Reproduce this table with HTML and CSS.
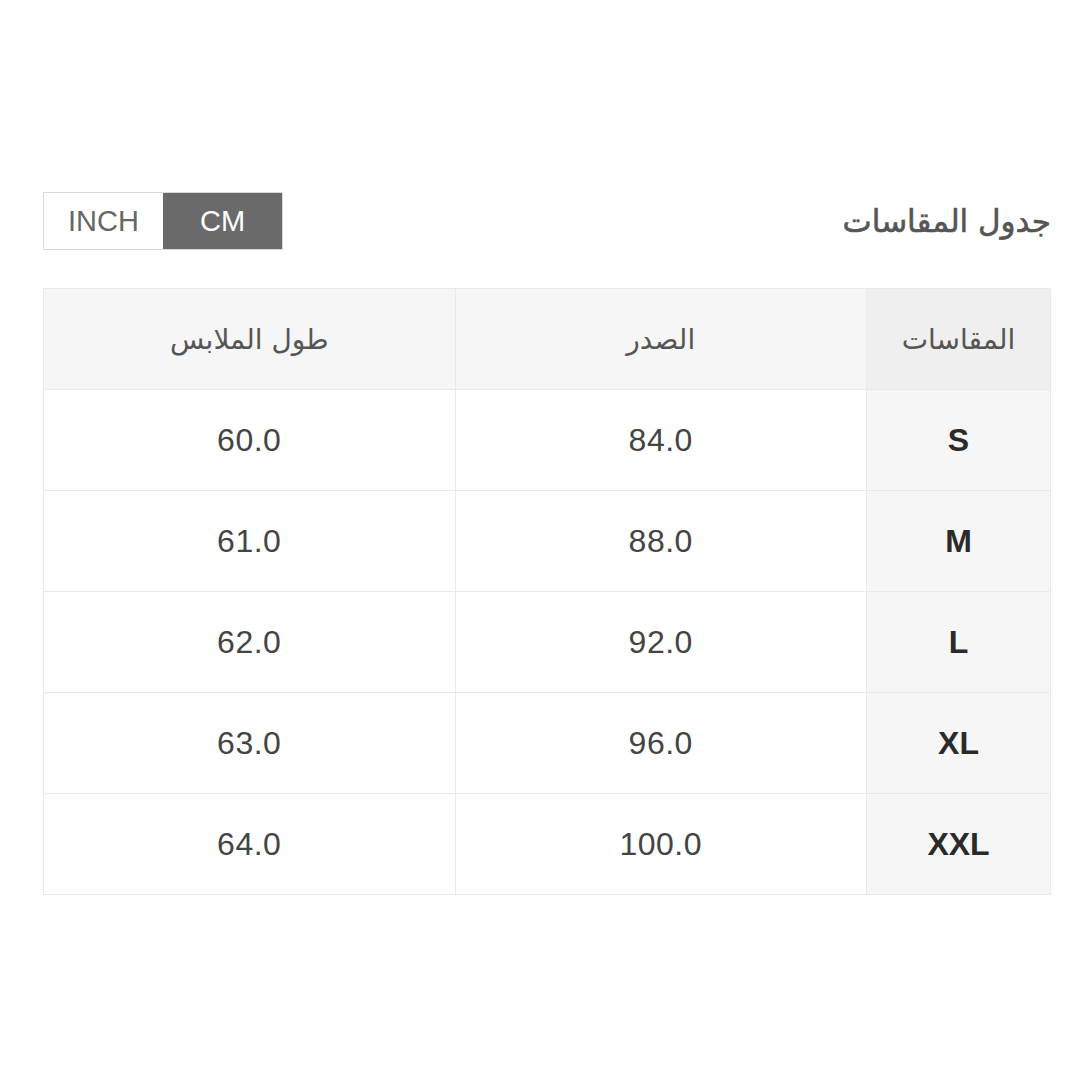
FILE: index.html
```html
<!DOCTYPE html>
<html lang="ar">
<head>
<meta charset="utf-8">
<link rel="stylesheet" href="styles.css">
</head>
<body>
<div class="page">
  <div class="topbar">
    <div class="toggle">
      <span class="opt">INCH</span>
      <span class="opt active">CM</span>
    </div>
    <h1 class="title" dir="rtl">جدول المقاسات</h1>
  </div>
  <table class="chart" dir="rtl">
    <thead>
      <tr><th class="size">المقاسات</th><th>الصدر</th><th>طول الملابس</th></tr>
    </thead>
    <tbody>
      <tr><td class="size">S</td><td>84.0</td><td>60.0</td></tr>
      <tr><td class="size">M</td><td>88.0</td><td>61.0</td></tr>
      <tr><td class="size">L</td><td>92.0</td><td>62.0</td></tr>
      <tr><td class="size">XL</td><td>96.0</td><td>63.0</td></tr>
      <tr><td class="size">XXL</td><td>100.0</td><td>64.0</td></tr>
    </tbody>
  </table>
</div>
</body>
</html>
```
FILE: styles.css
```css
html, body {
  margin: 0;
  padding: 0;
  background: #ffffff;
}
body {
  font-family: "Liberation Sans", "DejaVu Sans", Arial, sans-serif;
  color: #333;
}
.page {
  width: 1008px;
  margin: 0 0 0 43px;
  padding-top: 192px;
}
.topbar {
  display: flex;
  justify-content: space-between;
  align-items: center;
  height: 58px;
}
.toggle {
  display: flex;
  border: 1px solid #d8d8d8;
  height: 56px;
}
.opt {
  width: 119px;
  display: flex;
  align-items: center;
  justify-content: center;
  font-size: 29px;
  color: #666;
}
.opt.active {
  background: #6a6a6a;
  color: #fff;
}
.title {
  margin: 0;
  font-family: "DejaVu Sans", "Noto Sans", sans-serif;
  font-weight: normal;
  font-size: 31px;
  color: #555;
  -webkit-text-stroke: 0.6px #555;
}
.chart {
  margin-top: 38px;
  width: 1008px;
  border-collapse: collapse;
  table-layout: fixed;
}
.chart th, .chart td {
  border: 1px solid #e9e9e9;
  height: 100px;
  text-align: center;
  padding: 0;
}
.chart th {
  background: #f6f6f6;
  font-family: "DejaVu Sans", "Noto Sans", sans-serif;
  font-weight: normal;
  font-size: 28px;
  color: #555;
}
.chart th.size {
  background: #efefef;
  width: 183px;
}
.chart td {
  font-size: 32px;
  letter-spacing: 0.5px;
  color: #444;
}
.chart td.size {
  background: #f6f6f6;
  color: #2a2a2a;
  font-weight: bold;
  font-size: 32px;
  letter-spacing: 0;
}
```
